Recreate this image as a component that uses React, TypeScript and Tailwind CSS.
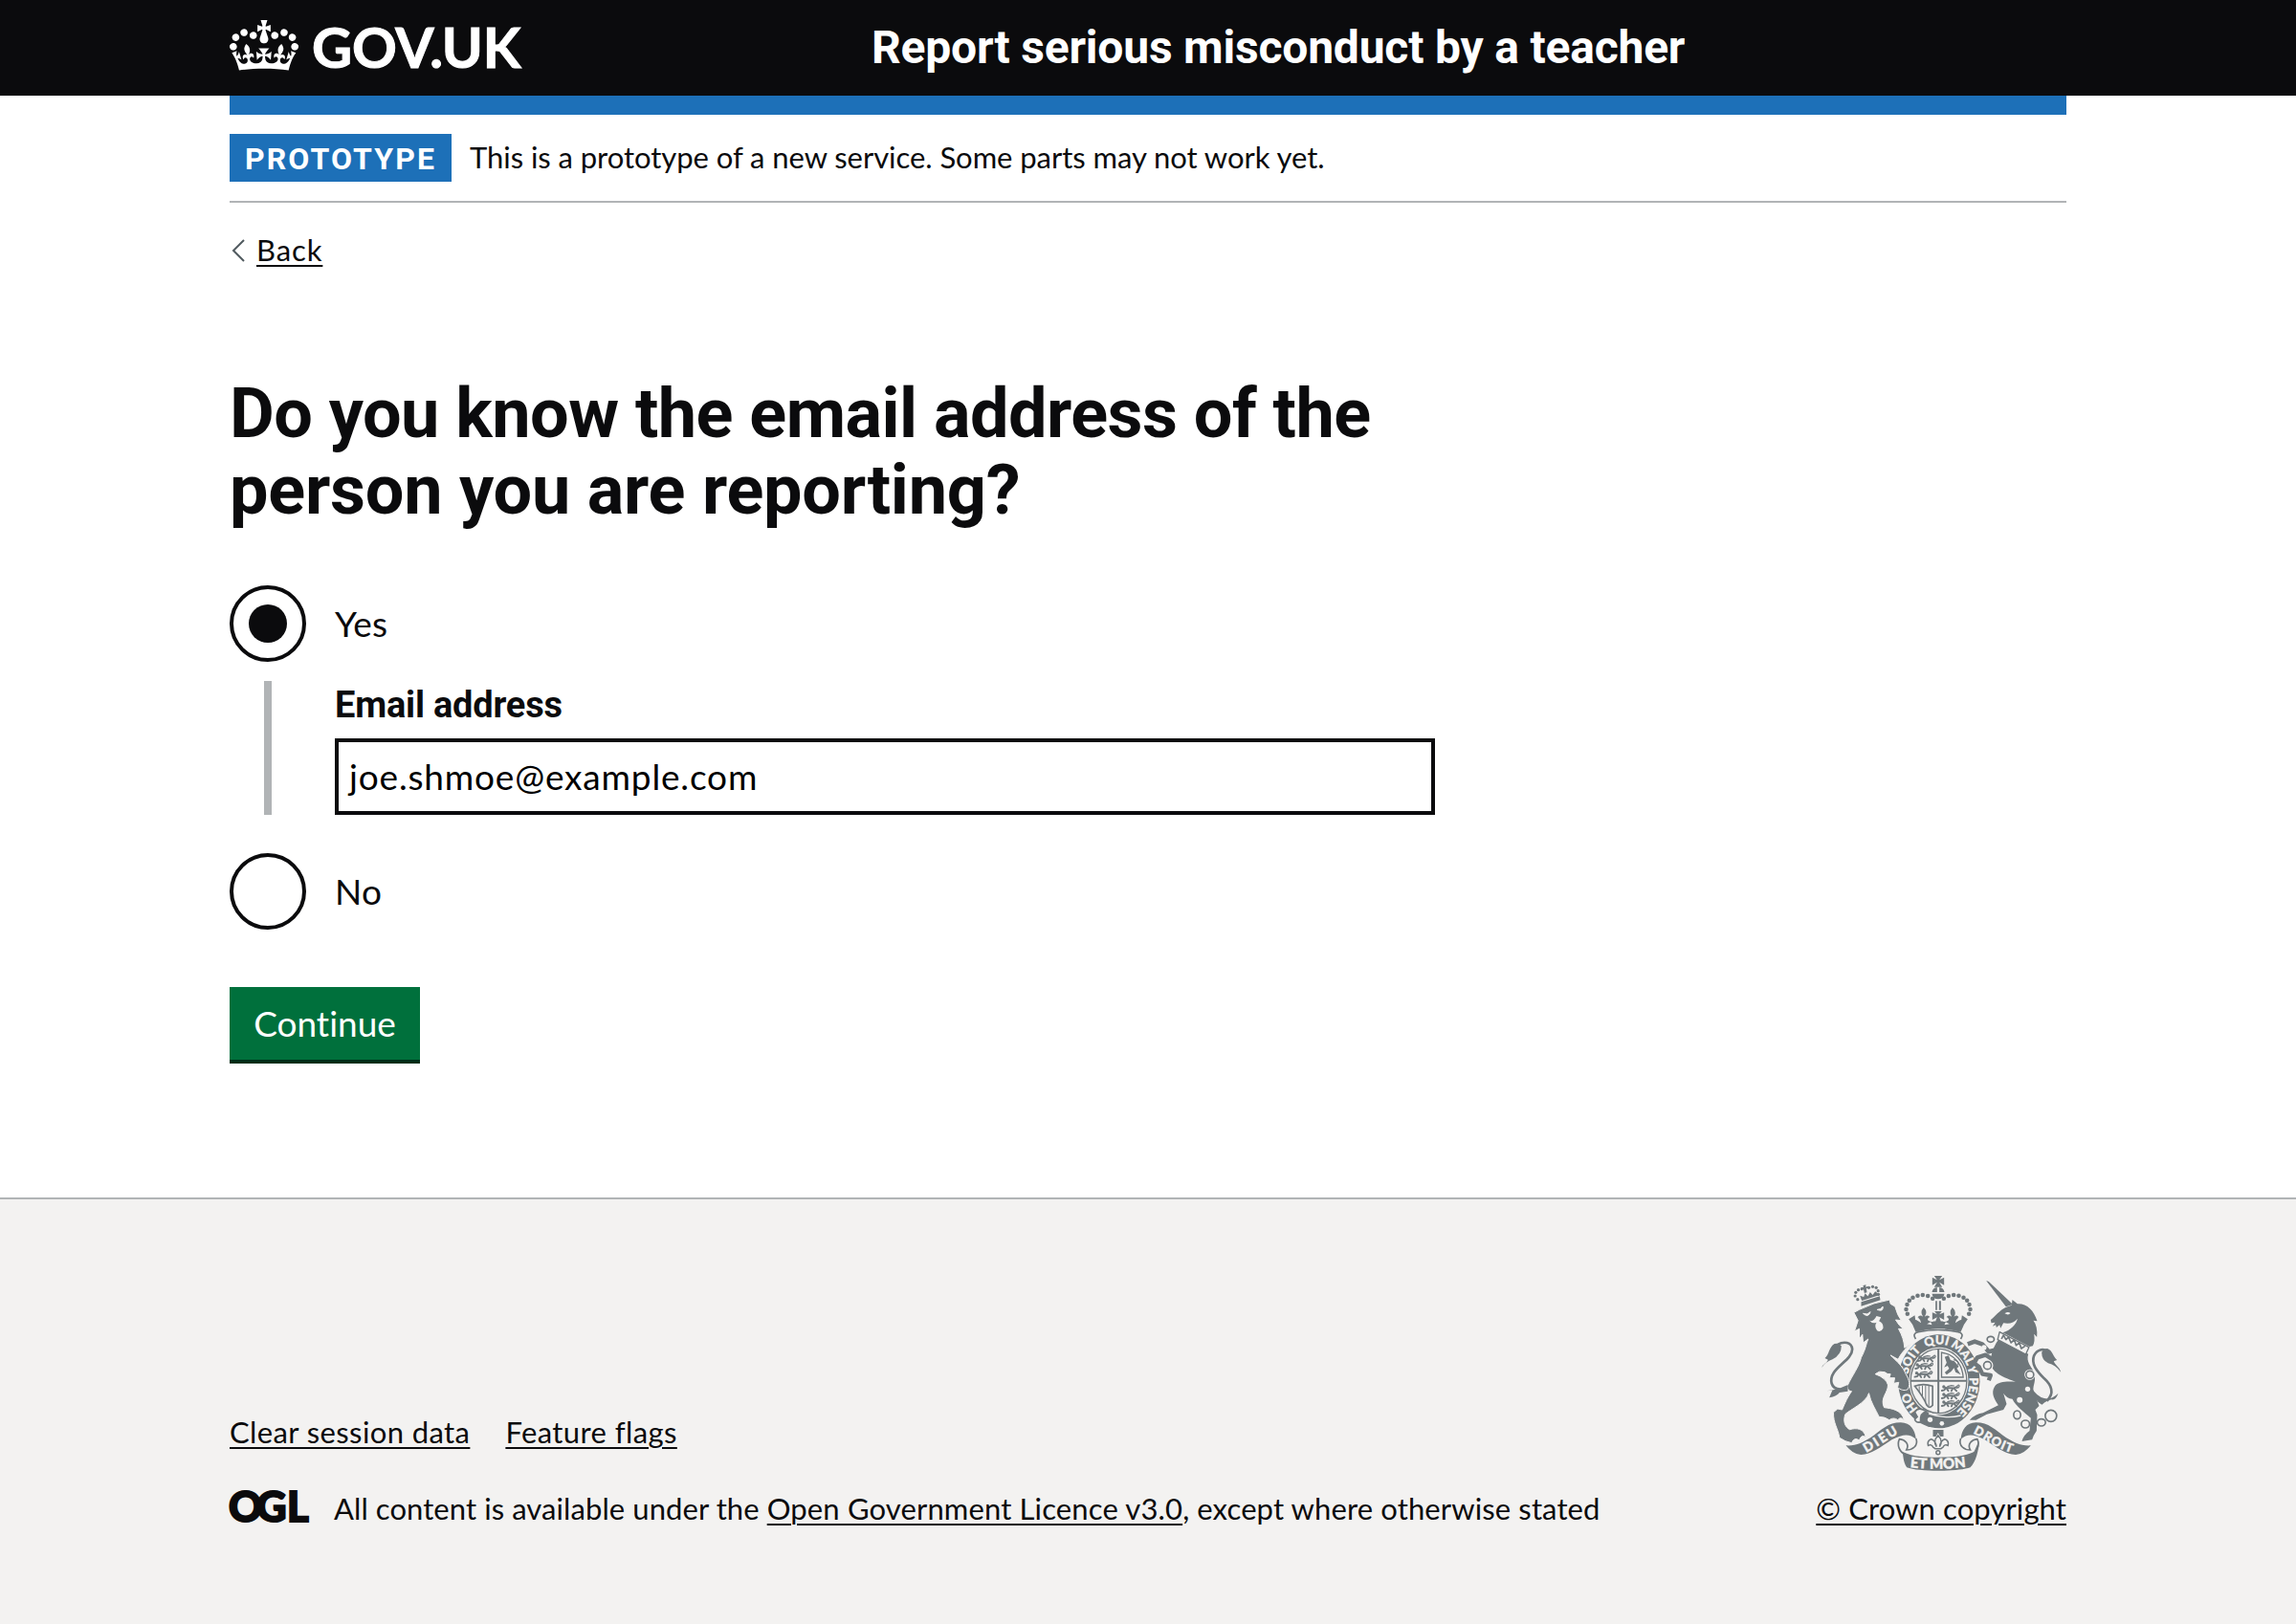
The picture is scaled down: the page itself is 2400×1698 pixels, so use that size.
import type { ReactNode } from 'react';

const GREY = '#6f777b';
const PAPER = '#f3f2f1';

function Crown() {
  return (
    <svg viewBox="0 0 132 97" className="mb-[6px] h-[53px] w-[72px] shrink-0" fill="#fff" aria-hidden="true">
      <path d="M25 30.2c3.5 1.5 7.7-.2 9.1-3.7 1.5-3.6-.2-7.8-3.9-9.2-3.6-1.4-7.6.3-9.1 3.9-1.4 3.5.3 7.5 3.9 9zM9 39.5c3.6 1.5 7.8-.2 9.2-3.7 1.5-3.6-.2-7.8-3.9-9.1-3.6-1.5-7.6.2-9.1 3.8-1.4 3.5.3 7.5 3.8 9zM4.4 57.2c3.5 1.5 7.7-.2 9.1-3.8 1.5-3.6-.2-7.7-3.9-9.1-3.5-1.5-7.6.3-9.1 3.8-1.4 3.5.3 7.6 3.9 9.1zm38.3-21.4c3.5 1.5 7.7-.2 9.1-3.8 1.5-3.6-.2-7.7-3.9-9.1-3.6-1.5-7.6.3-9.1 3.8-1.3 3.6.4 7.7 3.9 9.1zm64.4-5.6c-3.6 1.5-7.8-.2-9.1-3.7-1.5-3.6.2-7.8 3.8-9.2 3.6-1.4 7.7.3 9.2 3.9 1.3 3.5-.4 7.5-3.9 9zm15.9 9.3c-3.6 1.5-7.7-.2-9.1-3.7-1.5-3.6.2-7.8 3.7-9.1 3.6-1.5 7.7.2 9.2 3.8 1.5 3.5-.3 7.5-3.8 9zm4.7 17.7c-3.6 1.5-7.8-.2-9.2-3.8-1.5-3.6.2-7.7 3.9-9.1 3.6-1.5 7.7.3 9.2 3.8 1.3 3.5-.4 7.6-3.9 9.1zM89.3 35.8c-3.6 1.5-7.8-.2-9.2-3.8-1.4-3.6.2-7.7 3.9-9.1 3.6-1.5 7.7.3 9.2 3.8 1.4 3.6-.3 7.7-3.9 9.1zM69.7 17.7l8.9 4.7V9.3l-8.9 2.8c-.2-.3-.5-.6-.9-.9L72.4 0H59.6l3.5 11.2c-.3.3-.6.5-.9.9l-8.8-2.8v13.1l8.8-4.7c.3.3.6.7.9.9l-5 15.4v.1c-.2.8-.4 1.6-.4 2.4 0 4.1 3.1 7.5 7 8.1h.2c.3 0 .7.1 1 .1.4 0 .7 0 1-.1h.2c4-.6 7.1-4.1 7.1-8.1 0-.8-.1-1.7-.4-2.4V34l-5.1-15.4c.4-.2.7-.6 1-.9zM66 92.8c16.9 0 32.8 1.1 47.1 3.2 4-16.9 8.9-26.7 14-33.5l-9.6-3.4c1 4.9 1.1 7.2 0 10.2-1.5-1.4-3-4.3-4.2-8.7L108.6 76c2.8-2 5-3.2 7.5-3.3-4.4 9.4-10 11.9-13.6 11.2-4.3-.8-6.3-4.6-5.6-7.9 1-4.7 5.7-5.9 8-.5 4.3-8.7-3-11.4-7.6-8.8 7.1-7.2 7.9-13.5 2.1-21.1-8 6.1-8.1 12.3-4.5 20.8-4.7-5.4-12.1-2.5-9.5 6.2 3.4-5.2 7.9-2 7.2 3.1-.6 4.3-6.4 7.8-13.5 7.2-10.3-.9-10.9-8-11.2-13.8 2.5-.5 7.1 1.8 11 7.3L80.2 60c-4.1 4.4-8 5.3-12.3 5.4 1.4-4.4 8-11.6 8-11.6H55.5s6.4 7.2 7.9 11.6c-4.2-.1-8-1-12.3-5.4l1.4 16.4c3.9-5.5 8.5-7.7 10.9-7.3-.3 5.8-.9 12.8-11.1 13.8-7.2.6-12.9-2.9-13.5-7.2-.7-5 3.8-8.3 7.1-3.1 2.7-8.7-4.6-11.6-9.4-6.2 3.7-8.5 3.6-14.7-4.6-20.8-5.8 7.6-5 13.9 2.2 21.1-4.7-2.6-11.9.1-7.7 8.8 2.3-5.5 7.1-4.2 8.1.5.7 3.3-1.3 7.1-5.7 7.9-3.5.7-9-1.8-13.5-11.2 2.5.1 4.7 1.3 7.5 3.3l-4.7-15.4c-1.2 4.4-2.7 7.2-4.3 8.7-1.1-3-.9-5.3 0-10.2l-9.5 3.4c5 6.9 9.9 16.7 14 33.5 14.8-2.1 30.8-3.2 47.7-3.2z" />
    </svg>
  );
}

const garterWords: [string, number][] = [
  ['HO', 102],
  ['SOIT', 232],
  ['QUI', 328],
  ['MAL', 413],
  ['Y', 469],
  ['PENSE', 550],
];

const archPearls: [number, number][] = [
  [390, 113], [375, 105], [359, 102], [343, 104], [328, 110], [317, 119], [310, 132], [307, 147], [311, 161],
];

/* One walking lion, about 62 wide and 22 high. */
function WalkingLion({ x, y }: { x: number; y: number }) {
  return (
    <g transform={`translate(${x} ${y})`} fill="none" stroke={GREY} strokeWidth="5.5" strokeLinecap="round" strokeLinejoin="round">
      <path d="M12 8 L40 9 L48 5 M14 9 L10 15 L2 17 M17 10 L22 18 M36 10 L32 18 M40 10 L48 18" />
      <path d="M48 9 C56 8 60 2 54 -1 C48 0 50 6 54 8 M20 4 L32 1 L40 2" strokeWidth="3.5" />
      <circle cx="8" cy="5" r="5" fill={GREY} stroke="none" />
    </g>
  );
}

function RoyalArms() {
  return (
    <svg viewBox="30 36 770 624" className="h-[208px] w-[257px]" aria-hidden="true">
      <defs>
        <path id="garter" d="M409,488 A97,116 0 0 1 409,256 A97,116 0 0 1 409,488" />
        <path id="dieu" d="M182,597 C210,583 240,561 296,528" />
        <path id="etmon" d="M315,642 Q407,653 502,640" />
        <path id="droit" d="M516,536 C552,550 588,586 650,600" />
      </defs>

      {/* crown */}
      <g fill={GREY}>
        <path d="M395 42 H420 L411 55 L426 47 V71 L411 62 L420 77 H395 L404 62 L389 71 V47 L404 55Z" />
        <path d="M388 93 Q390 80 404 78 V93Z M411 78 Q425 80 427 93 H411Z M388 98 H427 Q424 114 407 115 Q391 114 388 98Z" />
        <path d="M399 121 h5 v28 h-5z M410 121 h6 v28 h-6z" />
        {archPearls.map(([x, y]) => (
          <g key={x}>
            <circle cx={x} cy={y} r="6.8" />
            <circle cx={815 - x} cy={y} r="6.8" />
          </g>
        ))}
        <path d="M396 153 H419 L411 163 L426 157 V180 L411 172 L418 190 H397 L404 172 L389 180 V157 L404 163Z" />
        <path d="M362 141 Q376 155 365 170 Q376 162 382 172 Q376 170 374 180 Q385 190 396 184 L407 190 L419 184 Q431 190 441 180 Q439 170 433 172 Q439 162 450 170 Q440 155 452 141 Q467 155 457 170 Q467 162 472 172 Q468 172 468 182 L480 180 L482 166 L500 178 Q486 195 478 218 Q407 197 337 218 Q330 195 315 178 L334 166 L336 180 L348 182 Q347 172 343 172 Q350 162 360 170 Q349 155 362 141Z" />
      </g>
      <path d="M340 181 l14 9 -4 -12z M475 181 l-14 9 4 -12z M372 193 l12 -6 4 9z M443 193 l-12 -6 -4 9z" fill={PAPER} />
      <path d="M337 240 Q325 222 345 218 Q407 205 470 218 Q490 222 478 240" fill={PAPER} stroke={GREY} strokeWidth="5" />

      {/* garter and shield */}
      <ellipse cx="410" cy="373" rx="128" ry="147" fill={GREY} />
      <ellipse cx="409" cy="372" rx="93" ry="106" fill={PAPER} />
      <ellipse cx="409" cy="372" rx="88" ry="101" fill="none" stroke={GREY} strokeWidth="4" />
      <path d="M408 270 V474 M321 371 H497" stroke={GREY} strokeWidth="6" />
      <WalkingLion x={342} y={292} />
      <WalkingLion x={334} y={316} />
      <WalkingLion x={332} y={342} />
      <WalkingLion x={417} y={385} />
      <WalkingLion x={417} y={409} />
      <WalkingLion x={417} y={433} />
      <path d="M418 282 V360 H486 Q482 310 440 288 Z" fill="none" stroke={GREY} strokeWidth="4" />
      <path d="M428 296 L440 292 L446 306 L458 310 L472 326 L466 332 L478 352 L462 344 L457 331 L448 342 L434 352 L428 345 L442 333 L437 324 L426 329 L434 314Z" fill={GREY} />
      <path d="M456 305 Q474 308 470 322" fill="none" stroke={GREY} strokeWidth="4" />
      <path d="M334 388 Q360 378 390 388 V448 Q380 460 372 448 Q360 420 334 388Z" fill="none" stroke={GREY} strokeWidth="5" />
      <path d="M348 388 V406 M358 386 V422 M368 386 V438 M378 387 V450" stroke={GREY} strokeWidth="3" />
      <g fill={PAPER} stroke={PAPER} strokeWidth="1" fontFamily="Lato, sans-serif" fontWeight="900" fontSize="38" textAnchor="middle">
        {garterWords.map(([word, offset]) => (
          <text key={word}>
            <textPath href="#garter" startOffset={offset}>{word}</textPath>
          </text>
        ))}
      </g>
      <path d="M340 470 Q400 500 478 486 L470 500 Q400 532 338 488Z" fill={GREY} />
      <path d="M372 468 Q350 470 352 500 Q338 505 334 492 L342 484 L334 470 Q345 450 372 468Z" fill={PAPER} stroke={GREY} strokeWidth="5" />
      <path d="M378 474 Q430 492 478 480" fill="none" stroke={PAPER} strokeWidth="4" />
      <circle cx="382" cy="493" r="8" fill={PAPER} />
      <circle cx="419" cy="505" r="7" fill={PAPER} />

      {/* lion */}
      <g fill={GREY}>
        <path
          d="M143 157 L160 148 Q205 125 255 117 L258 130 L272 138 Q280 168 292 182 L274 180 Q284 198 298 209 L283 208 C295 230 300 245 302 268 L322 255 C302 272 288 290 282 304 L258 291 C280 312 298 328 306 350 C318 370 320 385 312 398 C300 404 290 399 280 392 L284 376 L268 379 L271 362 L254 362 L258 350 Q248 352 240 344 Q222 338 210 350 Q244 362 250 384 C250 410 224 425 238 455 C262 458 292 462 301 494 Q288 482 281 494 Q268 484 254 494 Q240 484 222 484 C212 462 196 440 190 410 C182 440 130 462 116 476 C108 500 116 516 130 524 C150 518 176 520 180 548 Q166 538 160 558 Q145 546 136 566 Q115 562 98 550 C94 520 78 506 79 470 L92 459 L106 462 C112 450 118 430 136 404 Q124 404 122 388 C140 350 158 330 166 298 C180 272 180 260 188 240 L172 252 L170 226 L160 240 L160 208 L145 216 L156 182 Z"
          stroke={PAPER}
          strokeWidth="3"
        />
        <path d="M42 330 C46 318 58 316 62 305 L52 300 C66 290 64 266 82 255 Q96 252 104 262 Q104 290 76 304 Q54 312 42 330Z" />
        <path d="M58 403 L76 400 L66 424 Q90 420 98 408 L124 404 L124 384 Q84 402 58 403Z" />
        <path d="M166 124 L224 106 L226 118 L166 137Z M168 120 L162 104 L174 108 L178 97 L187 106 L194 93 L202 102 L210 91 L224 102Z" />
        {[[147, 105], [149, 94], [157, 86], [168, 83], [190, 79], [202, 76], [213, 79], [219, 89], [220, 100], [155, 116]].map(([x, y]) => (
          <circle key={`${x}-${y}`} cx={x} cy={y} r="4.8" />
        ))}
        <path d="M172 72 l9 -2 -1 7 7 -3 2 8 -7 -1 2 13 -8 2 -3 -13 -6 3 -1 -8 7 0z" />
      </g>
      <path d="M172 160 Q186 166 195 155 Q188 175 172 160Z M216 148 Q228 148 234 138 Q236 156 216 148Z" fill={PAPER} stroke={PAPER} strokeWidth="3" />
      <path d="M192 182 Q204 188 214 168 L228 172 L222 184 Q236 190 235 206 Q228 220 216 214 Q206 200 214 188 Q202 194 192 182Z" fill={PAPER} />
      <path d="M100 398 C70 396 66 368 80 346 C96 320 138 300 138 272 C136 250 112 246 92 258" fill="none" stroke={GREY} strokeWidth="8" />

      {/* unicorn */}
      <g fill={GREY}>
        <path d="M558 57 L566 60 L642 132 L620 139Z" />
        <path d="M572 180 C592 164 604 142 638 134 L640 117 L656 130 C684 128 708 150 718 184 L706 182 Q720 200 717 234 L708 224 Q712 246 704 262 L694 264 L610 220 C634 212 652 196 656 176 Q640 196 612 190 L603 206 L600 196 L590 204 L588 196 L578 200 L586 188 L574 190Z" />
        <path d="M598 240 L690 287 C682 312 700 326 708 344 C716 372 704 384 706 402 L724 450 L712 462 L718 478 L716 528 Q706 542 702 556 L670 561 Q674 542 694 528 L698 488 C676 468 652 452 640 428 Q622 426 612 410 Q618 430 622 444 L612 462 L560 476 L526 494 L506 494 Q526 474 548 472 L596 448 C584 430 572 410 584 390 C596 370 630 374 650 374 C600 356 566 340 572 300 Q580 262 598 240Z" />
        <path d="M733 446 Q718 438 712 425 L700 392 Q716 420 740 426 Q762 432 784 410 Q776 432 764 430 Q748 432 733 446Z" />
        <path d="M792 344 C788 328 774 322 770 310 L780 306 C766 292 766 276 750 270 Q738 270 732 282 Q732 306 752 316 Q776 322 792 344Z" />
      </g>
      <path d="M616 160 q10 -8 18 -1 q-6 8 -18 1z" fill={PAPER} />
      <g fill="none" stroke={GREY} strokeLinejoin="round">
        <path d="M596 272 L566 280 L545 256 L522 248 L500 256" strokeWidth="14" />
        <path d="M590 312 L556 290 L530 298 L520 316 L536 328 L546 350 L572 354 L566 370" strokeWidth="13" />
        <path d="M748 434 C774 410 762 384 740 364 C716 340 698 318 708 292 C718 272 736 270 750 278" strokeWidth="8" />
        <path d="M600 218 L692 266 L682 288 L594 242Z" fill={PAPER} strokeWidth="4" />
        <path d="M606 240 l6 -12 8 14 8 -8 8 18 10 -10 6 18 10 -8 6 18 12 -8" strokeWidth="5" />
      </g>
      <g fill="none" stroke={PAPER} strokeWidth="10">
        <circle cx="572" cy="241" r="10" />
        <circle cx="562" cy="323" r="13" />
        <circle cx="695" cy="352" r="12" />
      </g>
      <g fill={PAPER} stroke={GREY} strokeWidth="5">
        <ellipse cx="572" cy="241" rx="11" ry="9" />
        <circle cx="562" cy="323" r="12" />
        <circle cx="695" cy="352" r="12" />
        <ellipse cx="655" cy="478" rx="11" ry="13" />
        <ellipse cx="681" cy="507" rx="13" ry="12" />
        <ellipse cx="731" cy="502" rx="13" ry="11" />
        <circle cx="761" cy="481" r="18" />
      </g>
      <g fill={PAPER}>
        <circle cx="551" cy="267" r="8" />
        <circle cx="688" cy="397" r="8" />
        <circle cx="663" cy="431" r="9" />
      </g>

      {/* scroll */}
      <g fill="none" stroke={GREY} strokeWidth="5">
        <path d="M338 552 C346 576 326 588 308 588 C318 570 304 556 286 554 C276 574 288 596 304 602" />
        <path d="M478 552 C470 576 490 588 508 588 C498 570 512 556 530 554 C540 574 528 596 512 602" />
      </g>
      <g fill={GREY}>
        <path d="M118 574 C150 576 172 564 195 550 C230 525 250 502 290 502 C322 503 334 525 338 554 C318 538 300 536 262 556 C225 580 195 604 165 603 C145 602 132 590 118 574Z" />
        <path d="M698 574 C666 576 644 564 621 550 C586 525 566 502 526 502 C494 503 482 525 478 554 C498 538 516 536 554 556 C591 580 621 604 651 603 C671 602 684 590 698 574Z" />
        <path d="M296 594 C330 610 370 611 407 611 C445 611 485 610 520 594 L534 562 C536 590 525 625 508 643 C470 657 345 657 309 643 C300 630 298 615 296 594Z" />
        <path d="M391 525 H424 V546 H414 L407 534 L400 546 H391Z" />
      </g>
      <g fill={PAPER} stroke={GREY} strokeWidth="4.5">
        <path d="M407 542 Q424 560 412 578 Q414 560 428 554 Q442 558 438 574 Q428 568 422 580 L416 584 H398 L392 580 Q386 568 376 574 Q372 558 386 554 Q400 560 402 578 Q390 560 407 542Z" />
        <circle cx="407" cy="596" r="6" />
      </g>
      <g fill={PAPER} stroke={PAPER} strokeWidth="1.2" fontFamily="Lato, sans-serif" fontWeight="900" fontSize="41">
        <text><textPath href="#dieu" textLength="118">DIEU</textPath></text>
        <text fontSize="45"><textPath href="#etmon" startOffset="4" textLength="176">ET MON</textPath></text>
        <text fontSize="39"><textPath href="#droit" textLength="136">DROIT</textPath></text>
      </g>
    </svg>
  );
}

function FooterLink({ children, className = '' }: { children: ReactNode; className?: string }) {
  return (
    <a href="#" className={`underline decoration-2 underline-offset-4 ${className}`}>
      {children}
    </a>
  );
}

function Radio({ label, checked = false }: { label: string; checked?: boolean }) {
  return (
    <div className="flex h-20 items-center">
      <span className="flex size-20 items-center justify-center rounded-full border-4 border-[#0b0b0d]">
        {checked && <span className="size-10 rounded-full bg-[#0b0b0d]" />}
      </span>
      <span className="ml-[30px] text-[37px] tracking-[0.2px]">{label}</span>
    </div>
  );
}

export default function App() {
  return (
    <div className="flex h-[1698px] w-[2400px] flex-col bg-white font-['Lato',sans-serif] text-[#0b0b0d] [font-variant-ligatures:none]">
      <header className="h-[100px] bg-[#0b0b0d] text-white">
        <div className="mx-auto flex h-full w-[1920px] items-center">
          <div className="flex w-[671px] items-center">
            <Crown />
            <span className="mb-[2px] ml-[14px] text-[58px] leading-[98px] font-bold tracking-[-0.2px] [-webkit-text-stroke:1px_white]">
              GOV.UK
            </span>
          </div>
          <span className="font-['Roboto',sans-serif] text-[48px] leading-[100px] font-bold tracking-[-0.2px] whitespace-nowrap">
            Report serious misconduct by a teacher
          </span>
        </div>
      </header>

      <main className="mx-auto w-[1920px] grow">
        <div className="h-5 bg-[#1d70b8]" />
        <div className="flex h-[92px] items-center border-b-2 border-[#b1b4b6]">
          <strong className="flex h-[50px] w-[232px] items-center bg-[#1d70b8] pt-[2px] pl-4 font-['Roboto',sans-serif] text-[32px] leading-none font-bold tracking-[2.1px] text-white">
            PROTOTYPE
          </strong>
          <span className="mb-[1px] ml-[19px] text-[31px] tracking-[-0.05px]">
            This is a prototype of a new service. Some parts may not work yet.
          </span>
        </div>

        <a href="#" className="mt-[29px] flex h-10 items-center">
          <svg viewBox="0 0 28 40" className="h-10 w-7" fill="none" stroke="#505a5f" strokeWidth="2" aria-hidden="true">
            <path d="M15 10 L4 21 L15 32" />
          </svg>
          <span className="text-[31px] tracking-[0.9px] underline decoration-2 underline-offset-4">Back</span>
        </a>

        <h1 className="mt-28 font-['Roboto',sans-serif] text-[72px] leading-[80px] font-bold">
          <span className="block tracking-[-0.52px]">Do you know the email address of the</span>
          <span className="block tracking-[-0.22px]">person you are reporting?</span>
        </h1>

        <div className="mt-[59px]">
          <Radio label="Yes" checked />
          <div className="mt-5 ml-9 flex h-[140px] w-[1224px] border-l-8 border-[#b1b4b6] pl-[66px]">
            <div className="flex grow flex-col">
              <label className="h-[60px] font-['Roboto',sans-serif] text-[38px] leading-[50px] font-bold tracking-[-0.2px]">
                Email address
              </label>
              <div className="flex h-20 items-center border-4 border-[#0b0b0d] pl-[11px] text-[37px] tracking-[0.83px] text-black">
                joe.shmoe@example.com
              </div>
            </div>
          </div>
          <div className="mt-10">
            <Radio label="No" />
          </div>
        </div>

        <button className="mt-[60px] flex h-20 w-[199px] items-center justify-center border-b-4 border-[#002d18] bg-[#00703c] text-[37px] text-white">
          Continue
        </button>
      </main>

      <footer className="h-[446px] border-t-2 border-[#b1b4b6] bg-[#f3f2f1]">
        <div className="mx-auto flex w-[1920px] justify-between pt-[78px] text-[31px] leading-10">
          <div className="pt-[145px]">
            <div className="flex gap-[37px]">
              <FooterLink className="tracking-[0.39px]">Clear session data</FooterLink>
              <FooterLink className="tracking-[0.4px]">Feature flags</FooterLink>
            </div>
            <div className="mt-10 flex items-center">
              <svg viewBox="0 0 82 40" className="mr-[27px] h-10 w-[82px] overflow-visible" aria-label="OGL" role="img">
                <text
                  x="-1 28 60"
                  y="33.5"
                  fontFamily="Lato, sans-serif"
                  fontWeight="900"
                  fontSize="43.5"
                  fill="#0b0b0d"
                  stroke="#0b0b0d"
                  strokeWidth="2"
                >
                  OGL
                </text>
              </svg>
              <span className="whitespace-nowrap">
                <span className="tracking-[0.08px]">All content is available under the </span>
                <FooterLink className="tracking-[0.14px]">Open Government Licence v3.0</FooterLink>
                <span className="tracking-[0.12px]">, except where otherwise stated</span>
              </span>
            </div>
          </div>
          <div className="flex flex-col items-end">
            <div className="mr-[3px]">
              <RoyalArms />
            </div>
            <FooterLink className="mt-[17px] tracking-[0.1px]">© Crown copyright</FooterLink>
          </div>
        </div>
      </footer>
    </div>
  );
}
